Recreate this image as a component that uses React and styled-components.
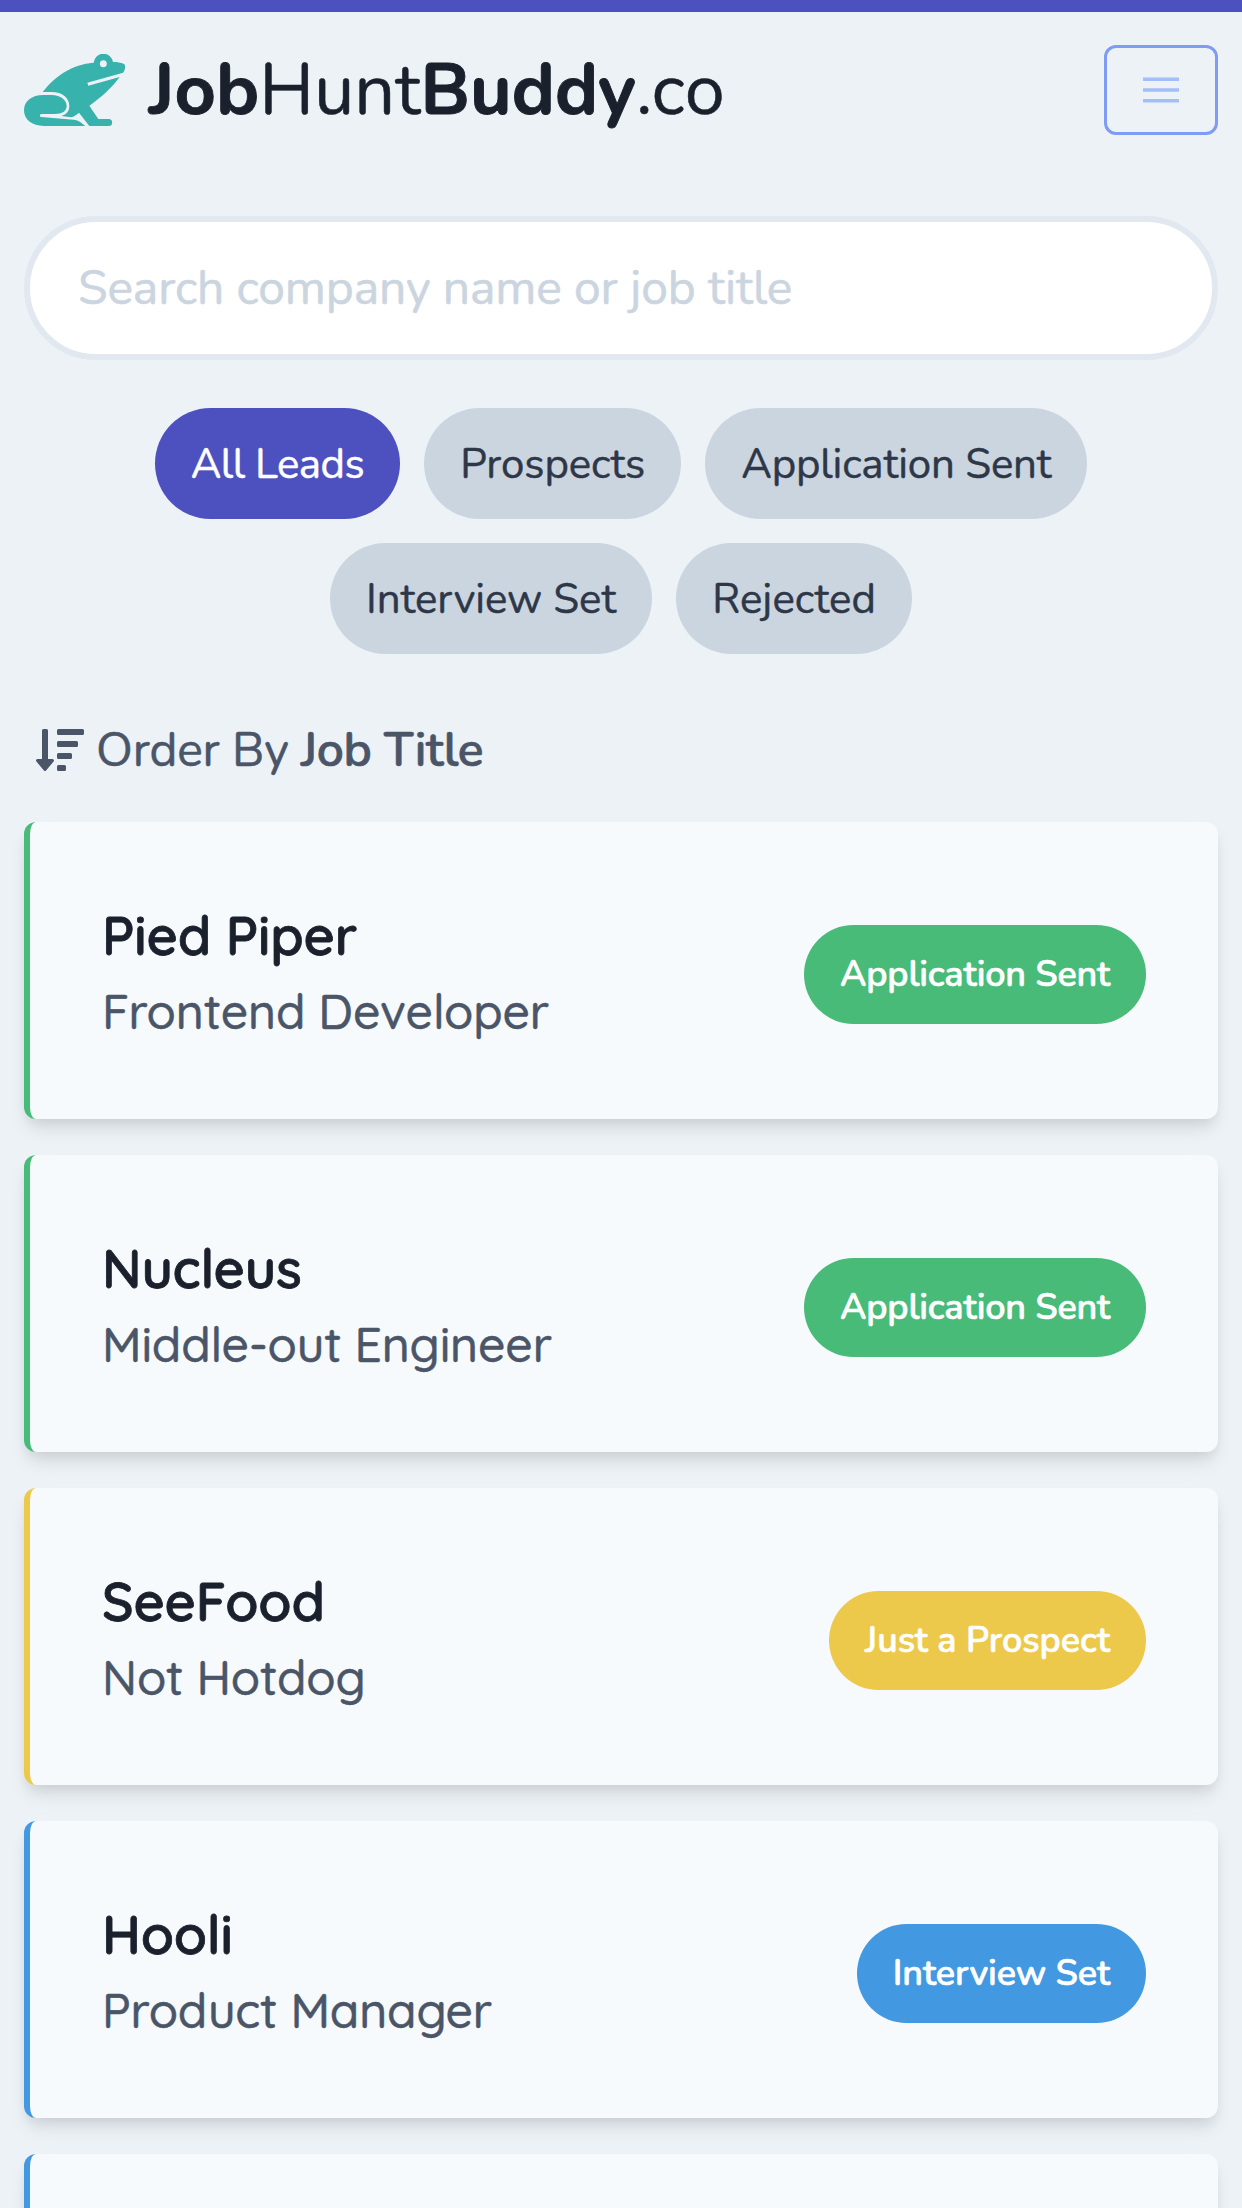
import React from "react";
import styled, { createGlobalStyle } from "styled-components";
import { FaSortAmountDown } from "react-icons/fa";

const GlobalStyle = createGlobalStyle`
  * { box-sizing: border-box; }
  body {
    margin: 0;
    background: #edf2f7;
    color: #1a202c;
    font-family: Nunito, Lato, "Open Sans", sans-serif;
    line-height: 1.5;
    overflow: hidden;
    -webkit-text-stroke: 0.5px currentColor;
  }
`;

const Page = styled.div`
  height: 2208px;
  overflow: hidden;
  border-top: 12px solid #4c51bf;
  padding: 33px 24px 0;
`;

const Header = styled.header`
  display: flex;
  align-items: center;
  justify-content: space-between;
  height: 90px;
`;

const Brand = styled.a`
  display: flex;
  align-items: center;
  gap: 23.7px;
  color: #1a202c;
  font-size: 72px;
  line-height: 90px;
  white-space: nowrap;
`;

const Frog = styled.svg`
  width: 101.33px;
  height: 72px;
  fill: #38b2ac;
`;

const BrandBold = styled.span`
  font-weight: 700;
  -webkit-text-stroke-width: 0.9px;
`;

const BrandSuffix = styled.span`
  letter-spacing: 0.6px;
`;

const MenuButton = styled.button`
  display: flex;
  align-items: center;
  padding: 24px 36px;
  border: 3px solid #7f9cf5;
  border-radius: 12px;
  background: transparent;
  color: #a3bffa;
`;

const MenuIcon = styled.svg`
  width: 36px;
  height: 36px;
  fill: currentColor;
`;

const SearchInput = styled.input`
  display: block;
  width: 100%;
  height: 144px;
  margin-top: 81px;
  padding: 0 48px;
  border: 6px solid #e2e8f0;
  border-radius: 72px;
  background: #fff;
  color: #2d3748;
  font: inherit;
  font-size: 48px;
  letter-spacing: -0.1px;
  outline: none;
  -webkit-text-stroke: 0.6px currentColor;

  &::placeholder {
    color: #cbd5e0;
    opacity: 1;
  }
`;

const Filters = styled.nav`
  display: flex;
  flex-wrap: wrap;
  justify-content: center;
  gap: 24px;
  margin-top: 48px;
  padding: 0 90px;
`;

const FilterPill = styled.button`
  padding: 25px 36px 23px;
  border: 0;
  border-radius: 56px;
  background: ${({ $active }) => ($active ? "#4c51bf" : "#cbd5e0")};
  color: ${({ $active }) => ($active ? "#fff" : "#2d3748")};
  font-family: inherit;
  font-size: 42px;
  font-weight: 400;
  line-height: 63px;
  letter-spacing: ${({ $tracking }) => $tracking}px;
  white-space: nowrap;
  -webkit-text-stroke: 0.45px currentColor;
`;

const OrderBy = styled.div`
  display: flex;
  align-items: center;
  gap: 12px;
  margin-top: 60px;
  padding-left: 12px;
  color: #4a5568;
  font-size: 48px;
  line-height: 72px;
`;

const SortIcon = styled(FaSortAmountDown)`
  width: 48px;
  height: 48px;
`;

const OrderLabel = styled.span`
  letter-spacing: -0.15px;
`;

const OrderField = styled.span`
  font-weight: 600;
  letter-spacing: -0.35px;
  -webkit-text-stroke-width: 0.7px;
`;

const LeadList = styled.main`
  display: flex;
  flex-direction: column;
  gap: 36px;
  margin-top: 36px;
`;

const Card = styled.article`
  display: flex;
  align-items: center;
  justify-content: space-between;
  height: 297px;
  padding: 72px;
  border-left: 6px solid ${({ $color }) => $color};
  border-radius: 12px;
  background: #f7fafc;
  box-shadow: 0 12px 18px -3px rgba(0, 0, 0, 0.1), 0 6px 12px -3px rgba(0, 0, 0, 0.06);
`;

const LeadText = styled.div`
  font-family: Quicksand, Nunito, Lato, sans-serif;
`;

const Company = styled.h2`
  margin: 0;
  padding-top: 1px;
  font-size: 54px;
  font-weight: 600;
  line-height: 81px;
  letter-spacing: -0.2px;
  -webkit-text-stroke-width: 0.8px;
`;

const JobTitle = styled.p`
  margin: -1px 0 0;
  color: #4a5568;
  font-size: 48px;
  font-weight: 500;
  line-height: 72px;
  letter-spacing: -0.15px;
`;

const Status = styled.span`
  margin-top: 8px;
  padding: 24px 36px;
  border-radius: 50px;
  background: ${({ $color }) => $color};
  color: #fff;
  font-size: 36px;
  font-weight: 600;
  line-height: 51px;
  letter-spacing: ${({ $tracking }) => $tracking}px;
  white-space: nowrap;
  -webkit-text-stroke-width: 0.6px;
`;

const filters = [
  { label: "All Leads", active: true, tracking: -0.52 },
  { label: "Prospects", tracking: -0.07 },
  { label: "Application Sent", tracking: -0.17 },
  { label: "Interview Set", tracking: 0 },
  { label: "Rejected", tracking: 0.12 },
];

const statuses = {
  sent: { label: "Application Sent", color: "#48bb78", tracking: -0.2 },
  prospect: { label: "Just a Prospect", color: "#ecc94b", tracking: -0.05 },
  interview: { label: "Interview Set", color: "#4299e1", tracking: -0.1 },
};

const leads = [
  { company: "Pied Piper", title: "Frontend Developer", status: "sent" },
  { company: "Nucleus", title: "Middle-out Engineer", status: "sent" },
  { company: "SeeFood", title: "Not Hotdog", status: "prospect" },
  { company: "Hooli", title: "Product Manager", status: "interview" },
];

function FrogLogo() {
  return (
    <Frog viewBox="72 162 304 216" aria-hidden="true">
      <path
        fillRule="evenodd"
        d="M128 276C165 228 217 193 281 188A29.200 29.200 0 0 1 339 186C349 186 358 187 367 190C373 192 376 195 375.500 202C375 208 372 214 369 218L262 248L265 257L359 231C335 264 305 291 268 317L295 357H326A10.500 10.500 0 0 1 326 378H268L237 338C230 344 222 350 213 352L184 348C200 343 208 333 208 318C208 294 187 276 155 276ZM310 180.500A10.500 10.500 0 1 0 310 201.500A10.500 10.500 0 1 0 310 180.500Z"
      />
      <path d="M72 331C72 303 95 285 130 285H155C182 285 200 300 200 318C200 333 186 342 165 342H124A4.500 4.500 0 0 0 124 351L220 359C238 361 245 369 256 378H132C95 378 72 358 72 331Z" />
    </Frog>
  );
}

function LeadCard({ company, title, status }) {
  const { label, color, tracking } = statuses[status];
  return (
    <Card $color={color}>
      <LeadText>
        <Company>{company}</Company>
        <JobTitle>{title}</JobTitle>
      </LeadText>
      <Status $color={color} $tracking={tracking}>{label}</Status>
    </Card>
  );
}

export default function App() {
  return (
    <Page>
      <GlobalStyle />
      <Header>
        <Brand>
          <FrogLogo />
          <span>
            <BrandBold>Job</BrandBold>Hunt<BrandBold>Buddy</BrandBold>
            <BrandSuffix>.co</BrandSuffix>
          </span>
        </Brand>
        <MenuButton aria-label="Menu">
          <MenuIcon viewBox="0 0 20 20">
            <path d="M0 3h20v2H0zM0 9h20v2H0zM0 15h20v2H0z" />
          </MenuIcon>
        </MenuButton>
      </Header>
      <SearchInput placeholder="Search company name or job title" />
      <Filters>
        {filters.map(({ label, active, tracking }) => (
          <FilterPill key={label} $active={active} $tracking={tracking}>{label}</FilterPill>
        ))}
      </Filters>
      <OrderBy>
        <SortIcon />
        <OrderLabel>
          Order By <OrderField>Job Title</OrderField>
        </OrderLabel>
      </OrderBy>
      <LeadList>
        {leads.map((lead) => (
          <LeadCard key={lead.company} {...lead} />
        ))}
        <Card $color={statuses.interview.color} />
      </LeadList>
    </Page>
  );
}
